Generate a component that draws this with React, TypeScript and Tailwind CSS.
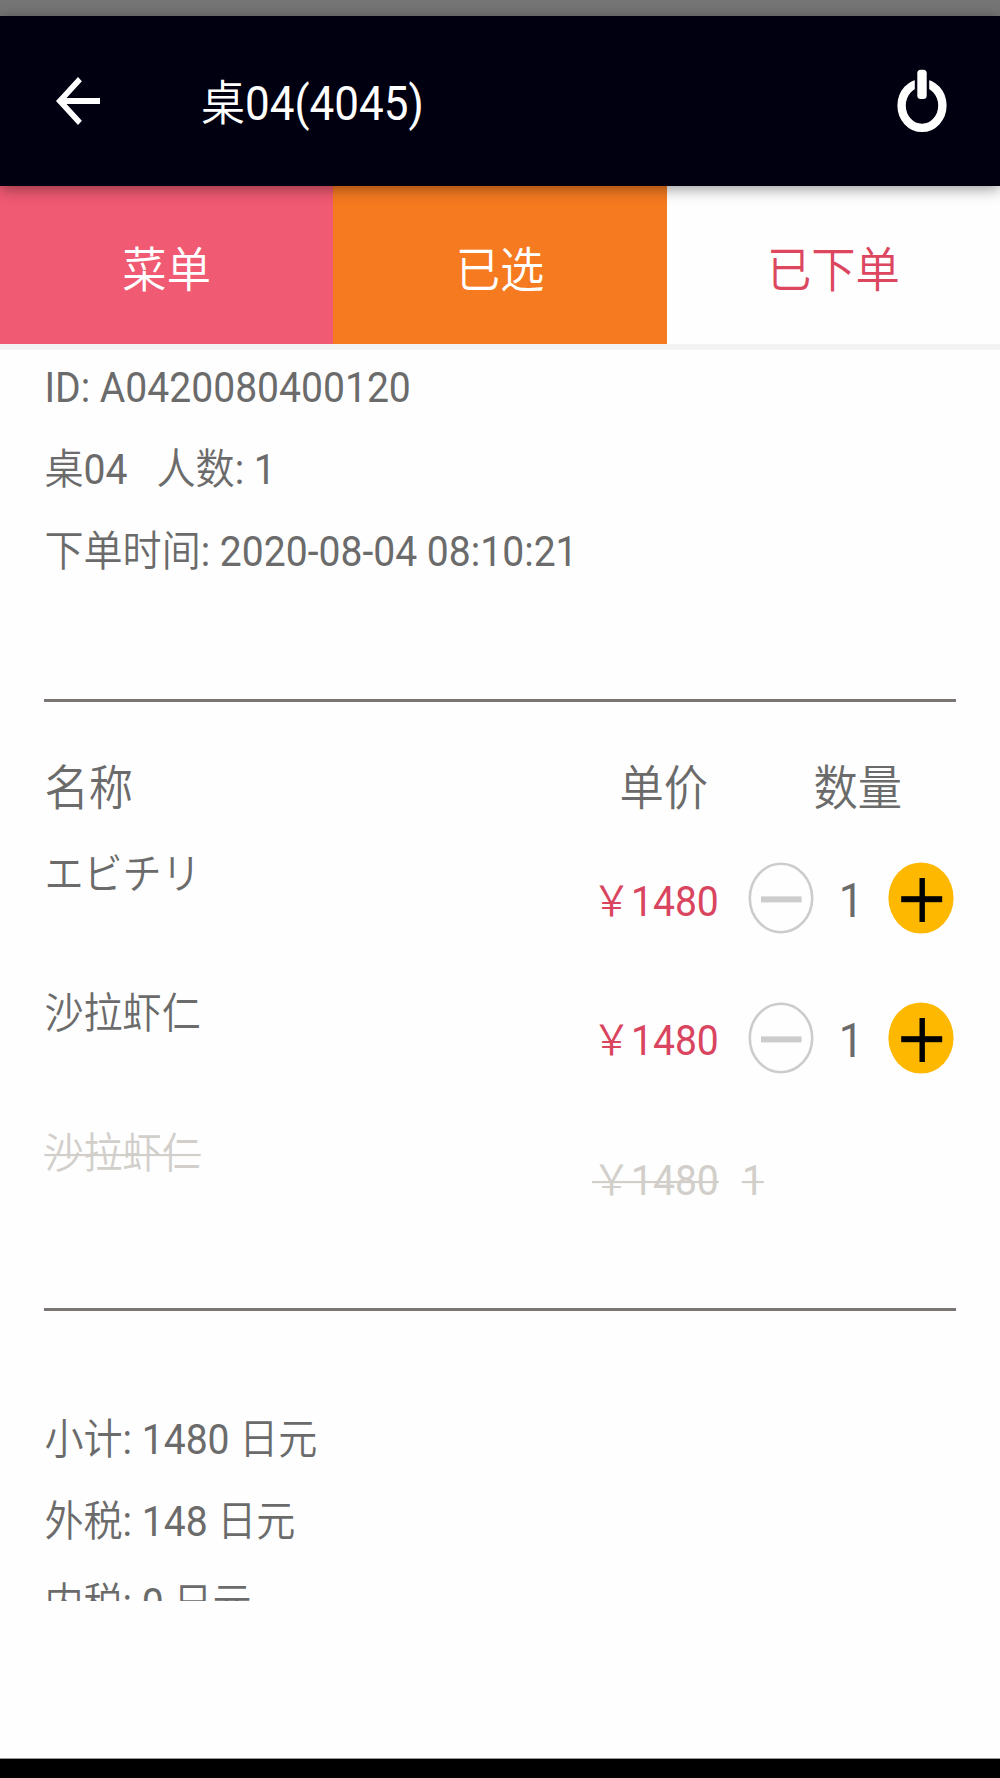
import { ReactNode } from 'react';
import clsx from 'clsx';

interface Dish {
  name: string;
  price: number;
  count: number;
  cancelled?: boolean;
}

const dishes: Dish[] = [
  { name: 'エビチリ', price: 1480, count: 1 },
  { name: '沙拉虾仁', price: 1480, count: 1 },
  { name: '沙拉虾仁', price: 1480, count: 1, cancelled: true },
];

// Text is slightly taller than wide, like the rest of the screen
function Label({ children, className }: { children: ReactNode; className?: string }) {
  return (
    <span className={clsx('inline-block scale-y-[1.09] whitespace-pre', className)}>{children}</span>
  );
}

function BackIcon() {
  return (
    <svg width="66" height="72" viewBox="0 0 24 24" preserveAspectRatio="none" fill="#fff">
      <path d="M20 11H7.83l5.59-5.59L12 4l-8 8 8 8 1.41-1.41L7.83 13H20v-2z" />
    </svg>
  );
}

function PowerIcon() {
  return (
    <svg width="50" height="64" viewBox="0 0 50 64">
      <ellipse cx="25" cy="36.5" rx="20.4" ry="22.4" fill="none" stroke="#fff" strokeWidth="8.4" />
      <rect x="17.8" y="4" width="14.4" height="27" fill="#000010" />
      <rect x="20.3" y="0.8" width="9.4" height="29.2" rx="3.5" fill="#fff" />
    </svg>
  );
}

function MinusIcon() {
  return (
    <svg width="66" height="72" viewBox="0 0 66 72">
      <ellipse cx="33" cy="36" rx="31.2" ry="34.2" fill="none" stroke="#ccc" strokeWidth="2.6" />
      <rect x="13" y="34.4" width="40.6" height="6" fill="#ccc" />
    </svg>
  );
}

function PlusIcon() {
  return (
    <svg width="66" height="72" viewBox="0 0 66 72">
      <ellipse cx="33" cy="36" rx="32.6" ry="35.6" fill="#ffb800" />
      <rect x="13.2" y="34.2" width="41" height="6" fill="#000" />
      <rect x="31.5" y="16" width="5.4" height="44" fill="#000" />
    </svg>
  );
}

function InfoRows({ rows }: { rows: string[] }) {
  return (
    <div className="flex flex-col gap-[7px]">
      {rows.map((row) => (
        <div key={row} className="h-[75px] leading-[77px]">
          <Label>{row}</Label>
        </div>
      ))}
    </div>
  );
}

function DishRow({ name, price, count, cancelled }: Dish) {
  const strike = cancelled && 'line-through decoration-2';

  return (
    <div className={clsx('flex h-[139.7px]', cancelled && 'text-[#d2cfcb]')}>
      <div className="w-[547.5px] leading-[93px]">
        <Label className={clsx(strike)}>{name}</Label>
      </div>
      <div
        className={clsx(
          'pt-[6px] leading-[135px]',
          cancelled ? 'w-[150px]' : 'w-[156px] text-[#d9455f]'
        )}
      >
        <Label className={clsx(strike)}>￥{price}</Label>
      </div>
      {cancelled ? (
        <div className="pt-[6px] leading-[135px]">
          <Label className={clsx(strike)}>{count}</Label>
        </div>
      ) : (
        <div className="flex items-center">
          <button>
            <MinusIcon />
          </button>
          <div className="w-[74.5px] pt-[7px] text-center text-[44px] leading-[133px]">
            <Label>{count}</Label>
          </div>
          <button>
            <PlusIcon />
          </button>
        </div>
      )}
    </div>
  );
}

export default function App() {
  return (
    <div className="flex h-[1778px] w-[1000px] flex-col overflow-hidden bg-[#fefefe] font-[Roboto,'Noto_Sans_CJK_SC_DemiLight','Noto_Sans_CJK_SC',sans-serif] text-[39.1px] text-[#6b6b6b]">
      <div className="h-4 shrink-0 bg-[#757575]" />
      <header className="relative z-10 flex h-[170px] shrink-0 items-center bg-[#000010] pr-[53.5px] pl-[45px] text-white shadow-[0_3px_14px_rgba(0,0,0,0.4)]">
        <button>
          <BackIcon />
        </button>
        <h1 className="ml-[90px] flex-1 pt-[6px] text-[44px] leading-[60px]">
          <Label>桌04(4045)</Label>
        </h1>
        <button>
          <PowerIcon />
        </button>
      </header>

      <nav className="grid h-[164px] shrink-0 grid-cols-3 border-b-[6px] border-[#f3f3f3] text-center text-[44.3px] leading-[170px] text-white">
        <div className="h-[158px] bg-[#f05a73]">
          <Label>菜单</Label>
        </div>
        <div className="h-[158px] bg-[#f57a20]">
          <Label>已选</Label>
        </div>
        <div className="h-[158px] text-[#dc465f]">
          <Label>已下单</Label>
        </div>
      </nav>

      <main className="h-[1251px] shrink-0 overflow-hidden px-[44.4px]">
        <InfoRows
          rows={['ID: A0420080400120', '桌04   人数: 1', '下单时间: 2020-08-04 08:10:21']}
        />
        <div className="mt-[110px] h-[3px] bg-[#7b7674]" />

        <div className="flex h-[126.5px] pt-[43px] text-[44.3px] leading-[88px]">
          <div className="w-[575px]">
            <Label>名称</Label>
          </div>
          <div className="w-[194px]">
            <Label>单价</Label>
          </div>
          <div>
            <Label>数量</Label>
          </div>
        </div>
        {dishes.map((dish, i) => (
          <DishRow key={i} {...dish} />
        ))}

        <div className="mt-[60px] mb-[91px] h-[3px] bg-[#7b7674]" />
        <InfoRows rows={['小计: 1480 日元', '外税: 148 日元', '内税: 0 日元']} />
      </main>

      <footer className="mt-auto h-5 shrink-0 border-t border-[#999] bg-black" />
    </div>
  );
}
